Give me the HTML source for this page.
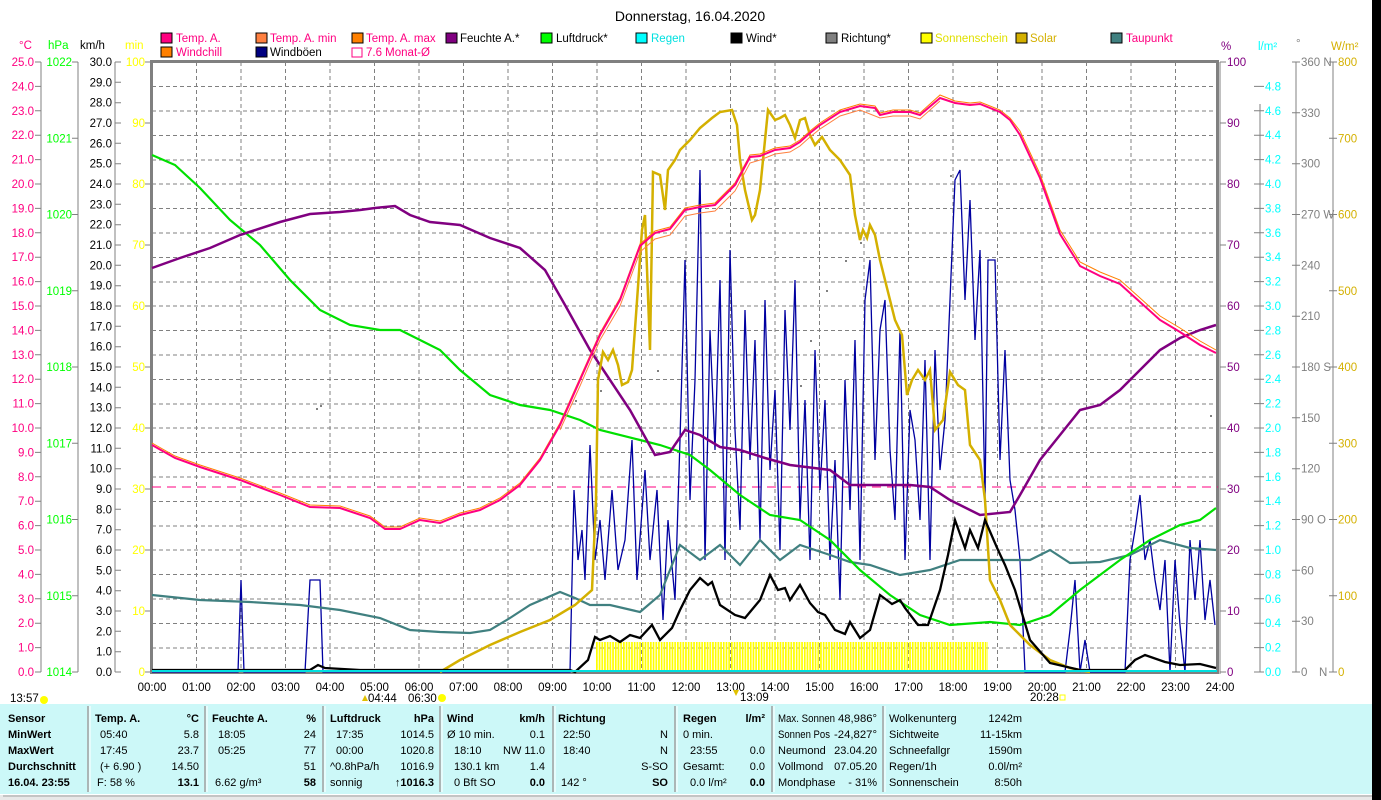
<!DOCTYPE html>
<html><head><meta charset="utf-8">
<style>
html,body{margin:0;padding:0;background:#fff;width:1381px;height:800px;overflow:hidden}
svg{display:block;font-family:"Liberation Sans",Arial,sans-serif}
</style></head><body>
<svg width="1381" height="800" viewBox="0 0 1381 800" xmlns="http://www.w3.org/2000/svg">
<defs>
<pattern id="sun" x="596" y="0" width="2.7" height="10" patternUnits="userSpaceOnUse"><rect x="0" y="0" width="1.7" height="10" fill="#ffff00"/></pattern>
</defs>
<rect x="0" y="0" width="1381" height="800" fill="#fff"/>
<rect x="1372" y="0" width="9" height="800" fill="#000"/>
<text x="690" y="21" font-size="14" text-anchor="middle" fill="#000">Donnerstag, 16.04.2020</text>

<!-- legend -->
<g font-size="11.5">
<rect x="161" y="33" width="11" height="10" fill="#ff0080" stroke="#000"/><text x="176" y="42" fill="#ff0080">Temp. A.</text>
<rect x="256" y="33" width="11" height="10" fill="#ff8040" stroke="#000"/><text x="270" y="42" fill="#ff0080">Temp. A. min</text>
<rect x="352" y="33" width="11" height="10" fill="#ff8000" stroke="#000"/><text x="366" y="42" fill="#ff0080">Temp. A. max</text>
<rect x="446" y="33" width="11" height="10" fill="#800080" stroke="#000"/><text x="460" y="42" fill="#000">Feuchte A.*</text>
<rect x="541" y="33" width="11" height="10" fill="#00ff00" stroke="#000"/><text x="556" y="42" fill="#000">Luftdruck*</text>
<rect x="636" y="33" width="11" height="10" fill="#00ffff" stroke="#000"/><text x="651" y="42" fill="#00e0e0">Regen</text>
<rect x="731" y="33" width="11" height="10" fill="#000" stroke="#000"/><text x="746" y="42" fill="#000">Wind*</text>
<rect x="826" y="33" width="11" height="10" fill="#808080" stroke="#000"/><text x="841" y="42" fill="#000">Richtung*</text>
<rect x="921" y="33" width="11" height="10" fill="#ffff00" stroke="#000"/><text x="935" y="42" fill="#e0e000">Sonnenschein</text>
<rect x="1016" y="33" width="11" height="10" fill="#d4b000" stroke="#000"/><text x="1030" y="42" fill="#d4b000">Solar</text>
<rect x="1111" y="33" width="11" height="10" fill="#408080" stroke="#000"/><text x="1126" y="42" fill="#ff0080">Taupunkt</text>
<rect x="161" y="47" width="11" height="10" fill="#ff8000" stroke="#000"/><text x="176" y="56" fill="#ff0080">Windchill</text>
<rect x="256" y="47" width="11" height="10" fill="#000080" stroke="#000"/><text x="270" y="56" fill="#000">Windböen</text>
<path d="M352 48 h10 v9 h-10 z" fill="none" stroke="#ff0080"/><text x="366" y="56" fill="#ff0080">7.6 Monat-Ø</text>
</g>

<!-- axis titles -->
<g font-size="11.5">
<text x="19" y="49" fill="#ff0080">°C</text>
<text x="48" y="49" fill="#00ff00">hPa</text>
<text x="80" y="49" fill="#000">km/h</text>
<text x="125" y="49" fill="#ffff00">min</text>
<text x="1221" y="50" fill="#800080">%</text>
<text x="1258" y="50" fill="#00ffff">l/m²</text>
<text x="1296" y="47" fill="#808080">°</text>
<text x="1331" y="50" fill="#d4b000">W/m²</text>
</g>

<!-- grid -->
<g stroke="#808080" stroke-width="1" stroke-dasharray="4,3">
<path d="M152 86.5H1218M152 111H1218M152 135.5H1218M152 160H1218M152 184H1218M152 208.5H1218M152 233H1218M152 257.5H1218M152 282H1218M152 306H1218M152 330.5H1218M152 355H1218M152 379.5H1218M152 404H1218M152 428H1218M152 452.5H1218M152 477H1218M152 501.5H1218M152 526H1218M152 550H1218M152 574.5H1218M152 599H1218M152 623.5H1218M152 648H1218"/>
<path d="M196.5 62V672M241 62V672M285.5 62V672M330 62V672M374.5 62V672M419 62V672M463.5 62V672M508 62V672M552.5 62V672M597 62V672M641.5 62V672M686 62V672M730.5 62V672M775 62V672M819.5 62V672M864 62V672M908.5 62V672M953 62V672M997.5 62V672M1042 62V672M1086.5 62V672M1131 62V672M1175.5 62V672"/>
</g>
<rect x="151.5" y="61.5" width="1066" height="611" fill="none" stroke="#808080" stroke-width="3"/>
<line x1="1220" y1="62" x2="1220" y2="674" stroke="#808080"/>

<!-- left axes -->
<g stroke="#808080" fill="none">
<path d="M41 62V672M78 62V672M115 62V672"/>
<path d="M35 62h6M35 86.4h6M35 110.8h6M35 135.2h6M35 159.6h6M35 184h6M35 208.4h6M35 232.8h6M35 257.2h6M35 281.6h6M35 306h6M35 330.4h6M35 354.8h6M35 379.2h6M35 403.6h6M35 428h6M35 452.4h6M35 476.8h6M35 501.2h6M35 525.6h6M35 550h6M35 574.4h6M35 598.8h6M35 623.2h6M35 647.6h6M35 672h6"/>
<path d="M72 62h6M72 138.25h6M72 214.5h6M72 290.75h6M72 367h6M72 443.25h6M72 519.5h6M72 595.75h6M72 672h6"/>
<path d="M115 62h6M115 82.3h6M115 102.7h6M115 123h6M115 143.3h6M115 163.7h6M115 184h6M115 204.3h6M115 224.7h6M115 245h6M115 265.3h6M115 285.7h6M115 306h6M115 326.3h6M115 346.7h6M115 367h6M115 387.3h6M115 407.7h6M115 428h6M115 448.3h6M115 468.7h6M115 489h6M115 509.3h6M115 529.7h6M115 550h6M115 570.3h6M115 590.7h6M115 611h6M115 631.3h6M115 651.7h6M115 672h6"/>
<path d="M145 62h6M145 123h6M145 184h6M145 245h6M145 306h6M145 367h6M145 428h6M145 489h6M145 550h6M145 611h6M145 672h6"/>
</g>
<g font-size="11.5" text-anchor="end">
<g fill="#ff0080">
<text x="34" y="66">25.0</text><text x="34" y="90.4">24.0</text><text x="34" y="114.8">23.0</text><text x="34" y="139.2">22.0</text><text x="34" y="163.6">21.0</text><text x="34" y="188">20.0</text><text x="34" y="212.4">19.0</text><text x="34" y="236.8">18.0</text><text x="34" y="261.2">17.0</text><text x="34" y="285.6">16.0</text><text x="34" y="310">15.0</text><text x="34" y="334.4">14.0</text><text x="34" y="358.8">13.0</text><text x="34" y="383.2">12.0</text><text x="34" y="407.6">11.0</text><text x="34" y="432">10.0</text><text x="34" y="456.4">9.0</text><text x="34" y="480.8">8.0</text><text x="34" y="505.2">7.0</text><text x="34" y="529.6">6.0</text><text x="34" y="554">5.0</text><text x="34" y="578.4">4.0</text><text x="34" y="602.8">3.0</text><text x="34" y="627.2">2.0</text><text x="34" y="651.6">1.0</text><text x="34" y="676">0.0</text>
</g>
<g fill="#00ff00">
<text x="72" y="66">1022</text><text x="72" y="142.25">1021</text><text x="72" y="218.5">1020</text><text x="72" y="294.75">1019</text><text x="72" y="371">1018</text><text x="72" y="447.25">1017</text><text x="72" y="523.5">1016</text><text x="72" y="599.75">1015</text><text x="72" y="676">1014</text>
</g>
<g fill="#000">
<text x="112" y="66">30.0</text><text x="112" y="86.3">29.0</text><text x="112" y="106.7">28.0</text><text x="112" y="127">27.0</text><text x="112" y="147.3">26.0</text><text x="112" y="167.7">25.0</text><text x="112" y="188">24.0</text><text x="112" y="208.3">23.0</text><text x="112" y="228.7">22.0</text><text x="112" y="249">21.0</text><text x="112" y="269.3">20.0</text><text x="112" y="289.7">19.0</text><text x="112" y="310">18.0</text><text x="112" y="330.3">17.0</text><text x="112" y="350.7">16.0</text><text x="112" y="371">15.0</text><text x="112" y="391.3">14.0</text><text x="112" y="411.7">13.0</text><text x="112" y="432">12.0</text><text x="112" y="452.3">11.0</text><text x="112" y="472.7">10.0</text><text x="112" y="493">9.0</text><text x="112" y="513.3">8.0</text><text x="112" y="533.7">7.0</text><text x="112" y="554">6.0</text><text x="112" y="574.3">5.0</text><text x="112" y="594.7">4.0</text><text x="112" y="615">3.0</text><text x="112" y="635.3">2.0</text><text x="112" y="655.7">1.0</text><text x="112" y="676">0.0</text>
</g>
<g fill="#ffff00">
<text x="145" y="66">100</text><text x="145" y="127">90</text><text x="145" y="188">80</text><text x="145" y="249">70</text><text x="145" y="310">60</text><text x="145" y="371">50</text><text x="145" y="432">40</text><text x="145" y="493">30</text><text x="145" y="554">20</text><text x="145" y="615">10</text><text x="145" y="676">0</text>
</g>
</g>

<!-- right axes -->
<g stroke="#808080" fill="none">
<path d="M1220 62h6M1220 123h6M1220 184h6M1220 245h6M1220 306h6M1220 367h6M1220 428h6M1220 489h6M1220 550h6M1220 611h6M1220 672h6"/>
<path d="M1260 104V672M1296 62V672M1333 62V672"/>
<path d="M1254 86.4h10M1254 110.8h10M1254 135.2h10M1254 159.6h10M1254 184h10M1254 208.4h10M1254 232.8h10M1254 257.2h10M1254 281.6h10M1254 306h10M1254 330.4h10M1254 354.8h10M1254 379.2h10M1254 403.6h10M1254 428h10M1254 452.4h10M1254 476.8h10M1254 501.2h10M1254 525.6h10M1254 550h10M1254 574.4h10M1254 598.8h10M1254 623.2h10M1254 647.6h10M1254 672h10"/>
<path d="M1292 62h8M1292 112.8h8M1292 163.7h8M1292 214.5h8M1292 265.3h8M1292 316.2h8M1292 367h8M1292 417.8h8M1292 468.7h8M1292 519.5h8M1292 570.3h8M1292 621.2h8M1292 672h8"/>
<path d="M1329 62h8M1329 138.25h8M1329 214.5h8M1329 290.75h8M1329 367h8M1329 443.25h8M1329 519.5h8M1329 595.75h8M1329 672h8"/>
</g>
<g font-size="11.5">
<g fill="#800080">
<text x="1227" y="66">100</text><text x="1227" y="127">90</text><text x="1227" y="188">80</text><text x="1227" y="249">70</text><text x="1227" y="310">60</text><text x="1227" y="371">50</text><text x="1227" y="432">40</text><text x="1227" y="493">30</text><text x="1227" y="554">20</text><text x="1227" y="615">10</text><text x="1227" y="676">0</text>
</g>
<g fill="#00ffff">
<text x="1265" y="90.4">4.8</text><text x="1265" y="114.8">4.6</text><text x="1265" y="139.2">4.4</text><text x="1265" y="163.6">4.2</text><text x="1265" y="188">4.0</text><text x="1265" y="212.4">3.8</text><text x="1265" y="236.8">3.6</text><text x="1265" y="261.2">3.4</text><text x="1265" y="285.6">3.2</text><text x="1265" y="310">3.0</text><text x="1265" y="334.4">2.8</text><text x="1265" y="358.8">2.6</text><text x="1265" y="383.2">2.4</text><text x="1265" y="407.6">2.2</text><text x="1265" y="432">2.0</text><text x="1265" y="456.4">1.8</text><text x="1265" y="480.8">1.6</text><text x="1265" y="505.2">1.4</text><text x="1265" y="529.6">1.2</text><text x="1265" y="554">1.0</text><text x="1265" y="578.4">0.8</text><text x="1265" y="602.8">0.6</text><text x="1265" y="627.2">0.4</text><text x="1265" y="651.6">0.2</text><text x="1265" y="676">0.0</text>
</g>
<g fill="#808080">
<text x="1301" y="66">360 N</text><text x="1301" y="116.8">330</text><text x="1301" y="167.7">300</text><text x="1301" y="218.5">270 W</text><text x="1301" y="269.3">240</text><text x="1301" y="320.2">210</text><text x="1301" y="371">180 S</text><text x="1301" y="421.8">150</text><text x="1301" y="472.7">120</text><text x="1301" y="523.5">90  O</text><text x="1301" y="574.3">60</text><text x="1301" y="625.2">30</text><text x="1301" y="676">0</text><text x="1319" y="676">N</text>
</g>
<g fill="#d4b000">
<text x="1338" y="66">800</text><text x="1338" y="142.25">700</text><text x="1338" y="218.5">600</text><text x="1338" y="294.75">500</text><text x="1338" y="371">400</text><text x="1338" y="447.25">300</text><text x="1338" y="523.5">200</text><text x="1338" y="599.75">100</text><text x="1338" y="676">0</text>
</g>
</g>

<!-- data -->
<rect x="596" y="642" width="392" height="30" fill="url(#sun)"/>
<line x1="152" y1="487" x2="1218" y2="487" stroke="#ff0080" stroke-dasharray="9,6"/>
<polyline fill="none" stroke="#0000a0" stroke-width="1.3" points="152,672 238,672 241,580 244,672 305,672 310,580 320,580 323,672 570,672 574,490 578,560 582,530 585,580 590,445 595,560 600,520 605,580 612,490 618,570 625,540 632,440 637,580 645,470 650,560 657,490 663,620 668,520 675,600 680,440 685,260 690,500 695,380 700,170 705,560 710,330 715,450 720,280 725,560 730,250 735,430 740,530 745,310 750,460 755,340 760,540 765,300 770,470 775,390 780,550 785,310 790,430 795,280 800,520 805,400 810,560 815,350 820,490 825,400 830,560 835,460 840,600 845,380 850,510 855,340 860,560 865,300 870,260 875,460 880,330 885,300 890,450 895,520 900,330 905,560 910,410 915,440 920,520 925,360 930,560 935,350 940,470 945,420 950,300 955,180 960,170 965,300 970,200 975,340 980,250 985,500 988,260 995,260 1000,460 1005,350 1010,480 1015,510 1020,560 1025,672 1065,672 1070,630 1075,580 1080,672 1085,640 1090,672 1125,672 1130,560 1135,530 1140,495 1145,560 1150,540 1155,580 1160,610 1165,560 1170,672 1175,560 1180,625 1185,672 1190,540 1195,600 1200,540 1205,620 1210,580 1215,625"/>
<polyline fill="none" stroke="#408080" stroke-width="2.2" points="152,595 200,600 250,602 300,605 340,610 380,618 410,630 440,632 470,633 490,630 510,618 530,605 560,592 575,598 590,605 610,605 640,612 660,595 680,545 700,560 720,545 740,565 760,540 780,560 800,545 830,555 850,562 870,565 900,575 930,570 960,560 990,560 1010,560 1030,560 1050,550 1070,563 1100,562 1130,555 1160,540 1190,548 1216,550"/>
<polyline fill="none" stroke="#00e000" stroke-width="2.2" points="152,155 175,165 200,188 230,220 260,245 290,280 320,310 350,325 380,330 400,330 420,340 440,350 460,370 490,395 520,405 550,410 580,420 600,430 640,440 660,445 690,455 710,470 740,495 770,515 800,520 830,540 860,570 890,595 920,615 950,625 990,622 1020,625 1050,615 1080,590 1100,575 1120,560 1150,540 1180,525 1200,520 1216,508"/>
<polyline fill="none" stroke="#800080" stroke-width="2.5" points="152,268 180,258 210,248 240,235 280,222 310,214 340,212 360,210 375,208 395,206 410,215 430,222 460,225 490,238 520,248 545,270 565,305 590,350 610,380 630,410 655,455 670,452 685,430 700,435 720,447 740,450 765,458 790,465 830,470 850,485 880,485 910,485 930,487 950,500 980,515 1010,512 1020,495 1040,460 1060,435 1080,410 1100,405 1120,390 1140,370 1160,350 1180,338 1200,330 1216,325"/>
<polyline fill="none" stroke="#d4b000" stroke-width="2.5" points="440,672 460,660 490,645 520,632 550,620 575,605 592,590 596,500 598,380 603,352 608,360 613,350 618,365 622,385 628,382 632,370 636,315 642,230 645,215 650,350 653,172 660,175 665,210 668,170 675,160 680,150 690,140 700,128 712,118 720,112 732,110 737,125 740,160 745,190 752,220 755,215 760,190 765,140 768,110 775,120 780,118 785,115 790,125 795,138 800,120 805,118 810,135 815,145 822,137 830,150 840,160 850,175 855,215 860,240 863,230 867,238 870,225 875,235 880,260 885,280 890,300 895,320 902,335 907,395 912,380 918,370 925,380 930,370 935,430 943,420 950,372 958,385 965,390 970,445 980,460 985,500 990,580 1000,600 1010,625 1030,645 1050,660 1070,668 1090,672"/>
<polyline fill="none" stroke="#000" stroke-width="2.3" points="152,670 310,670 318,665 325,668 360,670 570,670 575,672 588,660 595,637 600,640 610,636 620,642 630,635 640,638 652,625 660,640 672,628 680,610 690,590 700,578 708,585 712,582 720,605 735,615 745,618 760,600 770,575 778,590 785,588 790,600 800,585 810,603 818,612 825,615 835,630 845,634 850,622 860,638 870,630 880,595 892,604 900,600 905,608 918,625 928,625 940,590 948,555 955,520 965,548 970,530 978,548 985,520 998,550 1005,565 1015,590 1030,640 1050,663 1080,670 1125,670 1135,660 1145,655 1165,662 1180,665 1200,664 1216,668"/>
<polyline fill="none" stroke="#ff8000" stroke-width="1" points="152,443 175,456 200,465 240,478 280,493 310,505 340,506 370,516 385,527 400,527 420,518 440,521 460,513 480,508 500,498 520,483 540,458 560,423 580,378 600,333 620,298 640,244 655,231 670,227 685,208 700,205 715,203 735,183 750,155 760,154 775,148 790,146 800,140 810,131 820,123 840,110 860,104 875,106 880,113 893,110 910,110 920,113 940,95 955,101 970,103 980,102 990,106 1000,110 1010,118 1020,131 1040,174 1060,230 1080,262 1100,272 1120,280 1140,298 1160,316 1180,328 1200,341 1216,350"/>
<polyline fill="none" stroke="#ff8040" stroke-width="1" points="560,430 580,386 600,340 620,306 640,252 655,239 670,235 685,216 700,213 715,211 735,191 750,163 760,160 775,154 790,152 800,146 810,137 820,129 840,116 860,110 880,118 893,116 910,116 920,119 940,101"/>
<polyline fill="none" stroke="#ff0080" stroke-width="2" points="152,445 175,458 200,467 240,480 280,495 310,507 340,508 370,518 385,529 400,529 420,520 440,523 460,515 480,510 500,500 520,485 540,460 560,425 580,380 600,335 620,300 640,246 655,233 670,229 685,210 700,207 715,205 735,185 750,157 760,156 775,150 790,148 800,142 810,133 820,125 840,112 860,106 875,108 880,115 893,112 910,112 920,115 940,98 955,103 970,105 980,104 990,108 1000,112 1010,120 1020,135 1040,178 1060,234 1080,266 1100,276 1120,284 1140,302 1160,320 1180,332 1200,345 1216,353"/>
<line x1="152" y1="671" x2="1217" y2="671" stroke="#00e0e0" stroke-width="2"/>
<g fill="#808080">
<rect x="316" y="408" width="2" height="2"/><rect x="320" y="405" width="2" height="2"/><rect x="575" y="400" width="2" height="2"/><rect x="600" y="390" width="2" height="2"/><rect x="657" y="370" width="2" height="2"/><rect x="800" y="385" width="2" height="2"/><rect x="810" y="340" width="2" height="2"/><rect x="826" y="290" width="2" height="2"/><rect x="845" y="260" width="2" height="2"/><rect x="860" y="242" width="2" height="2"/><rect x="950" y="175" width="2" height="2"/><rect x="1210" y="415" width="2" height="2"/>
</g>

<!-- time labels -->
<g font-size="11.5" text-anchor="middle" fill="#000">
<text x="152" y="691">00:00</text><text x="196.5" y="691">01:00</text><text x="241" y="691">02:00</text><text x="285.5" y="691">03:00</text><text x="330" y="691">04:00</text><text x="374.5" y="691">05:00</text><text x="419" y="691">06:00</text><text x="463.5" y="691">07:00</text><text x="508" y="691">08:00</text><text x="552.5" y="691">09:00</text><text x="597" y="691">10:00</text><text x="641.5" y="691">11:00</text><text x="686" y="691">12:00</text><text x="730.5" y="691">13:00</text><text x="775" y="691">14:00</text><text x="819.5" y="691">15:00</text><text x="864" y="691">16:00</text><text x="908.5" y="691">17:00</text><text x="953" y="691">18:00</text><text x="997.5" y="691">19:00</text><text x="1042" y="691">20:00</text><text x="1086.5" y="691">21:00</text><text x="1131" y="691">22:00</text><text x="1175.5" y="691">23:00</text><text x="1220" y="691">24:00</text>
</g>
<g font-size="11.5" fill="#000">
<text x="10" y="702">13:57</text><circle cx="44" cy="700" r="4" fill="#ffff00"/>
<text x="368" y="702">04:44</text><path d="M362 701 l3 -6 l3 6z" fill="#e0c000"/>
<text x="408" y="702">06:30</text><circle cx="442" cy="698" r="4" fill="#ffff00"/>
<text x="740" y="701">13:09</text><path d="M733 690 l3 6 l3 -6z" fill="#e0c000"/>
<text x="1030" y="701">20:28</text><rect x="1060" y="695" width="5" height="5" fill="none" stroke="#ffff00"/>
</g>

<!-- table -->
<rect x="0" y="704" width="1372" height="90" fill="#ccf8f8"/>
<g stroke="#a0a0a0" stroke-width="1.5">
<path d="M88 706V792M205 706V792M323 706V792M440 706V792M553 706V792M675 706V792M772 706V792M883 706V792"/>
</g>
<g stroke="#fff"><path d="M90 706V792M207 706V792M325 706V792M442 706V792M555 706V792M677 706V792M774 706V792M885 706V792"/></g>
<rect x="0" y="795" width="1372" height="5" fill="#e8e8e8"/>
<path d="M3 796H1372" stroke="#a0a0a0"/>
<g font-size="11" fill="#000">
<g font-weight="bold">
<text x="8" y="722">Sensor</text><text x="8" y="738">MinWert</text><text x="8" y="754">MaxWert</text><text x="8" y="770">Durchschnitt</text><text x="8" y="786">16.04. 23:55</text>
<text x="95" y="722">Temp. A.</text><text x="199" y="722" text-anchor="end">°C</text>
<text x="212" y="722">Feuchte A.</text><text x="316" y="722" text-anchor="end">%</text>
<text x="330" y="722">Luftdruck</text><text x="434" y="722" text-anchor="end">hPa</text>
<text x="447" y="722">Wind</text><text x="545" y="722" text-anchor="end">km/h</text>
<text x="558" y="722">Richtung</text>
<text x="683" y="722">Regen</text><text x="765" y="722" text-anchor="end">l/m²</text>
<text x="199" y="786" text-anchor="end">13.1</text><text x="316" y="786" text-anchor="end">58</text><text x="434" y="786" text-anchor="end">↑1016.3</text><text x="545" y="786" text-anchor="end">0.0</text><text x="668" y="786" text-anchor="end">SO</text><text x="765" y="786" text-anchor="end">0.0</text>
</g>
<text x="100" y="738">05:40</text><text x="199" y="738" text-anchor="end">5.8</text>
<text x="100" y="754">17:45</text><text x="199" y="754" text-anchor="end">23.7</text>
<text x="100" y="770">(+ 6.90 )</text><text x="199" y="770" text-anchor="end">14.50</text>
<text x="97" y="786">F: 58 %</text>
<text x="218" y="738">18:05</text><text x="316" y="738" text-anchor="end">24</text>
<text x="218" y="754">05:25</text><text x="316" y="754" text-anchor="end">77</text>
<text x="316" y="770" text-anchor="end">51</text>
<text x="215" y="786">6.62 g/m³</text>
<text x="336" y="738">17:35</text><text x="434" y="738" text-anchor="end">1014.5</text>
<text x="336" y="754">00:00</text><text x="434" y="754" text-anchor="end">1020.8</text>
<text x="330" y="770">^0.8hPa/h</text><text x="434" y="770" text-anchor="end">1016.9</text>
<text x="330" y="786">sonnig</text>
<text x="447" y="738">Ø 10 min.</text><text x="545" y="738" text-anchor="end">0.1</text>
<text x="454" y="754">18:10</text><text x="545" y="754" text-anchor="end">NW 11.0</text>
<text x="454" y="770">130.1 km</text><text x="545" y="770" text-anchor="end">1.4</text>
<text x="454" y="786">0 Bft SO</text>
<text x="563" y="738">22:50</text><text x="668" y="738" text-anchor="end">N</text>
<text x="563" y="754">18:40</text><text x="668" y="754" text-anchor="end">N</text>
<text x="668" y="770" text-anchor="end">S-SO</text>
<text x="561" y="786">142 °</text>
<text x="683" y="738">0 min.</text>
<text x="690" y="754">23:55</text><text x="765" y="754" text-anchor="end">0.0</text>
<text x="683" y="770">Gesamt:</text><text x="765" y="770" text-anchor="end">0.0</text>
<text x="690" y="786">0.0 l/m²</text>
<text x="778" y="722" textLength="57" lengthAdjust="spacingAndGlyphs">Max. Sonnen</text><text x="838" y="722" textLength="39" lengthAdjust="spacingAndGlyphs">48,986°</text>
<text x="778" y="738" textLength="52" lengthAdjust="spacingAndGlyphs">Sonnen Pos</text><text x="834" y="738" textLength="43" lengthAdjust="spacingAndGlyphs">-24,827°</text>
<text x="778" y="754">Neumond</text><text x="877" y="754" text-anchor="end">23.04.20</text>
<text x="778" y="770">Vollmond</text><text x="877" y="770" text-anchor="end">07.05.20</text>
<text x="778" y="786">Mondphase</text><text x="877" y="786" text-anchor="end">- 31%</text>
<text x="889" y="722">Wolkenunterg</text><text x="1022" y="722" text-anchor="end">1242m</text>
<text x="889" y="738">Sichtweite</text><text x="1022" y="738" text-anchor="end">11-15km</text>
<text x="889" y="754">Schneefallgr</text><text x="1022" y="754" text-anchor="end">1590m</text>
<text x="889" y="770">Regen/1h</text><text x="1022" y="770" text-anchor="end">0.0l/m²</text>
<text x="889" y="786">Sonnenschein</text><text x="1022" y="786" text-anchor="end">8:50h</text>
</g>
</svg>
</body></html>
